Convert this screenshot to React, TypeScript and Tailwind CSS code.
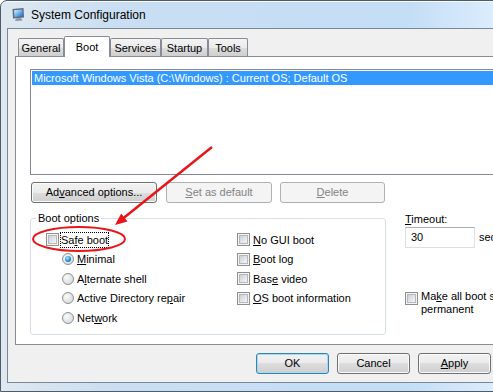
import React from "react";

const btnBase =
  "h-[21px] shrink-0 rounded-[3px] border text-[11px] leading-none flex items-center justify-center";
const btnNormal = `${btnBase} border-[#707070] text-black bg-[linear-gradient(to_bottom,#f2f2f2_0%,#ebebeb_50%,#dddddd_50%,#cfcfcf_100%)] shadow-[inset_0_0_0_1px_#fbfbfb]`;
const btnDisabled = `${btnBase} border-[#adb2b5] text-[#838383] bg-[#f4f4f4]`;
const btnDefault = `${btnBase} border-[#3c7fb1] text-black bg-[linear-gradient(to_bottom,#f2f2f2_0%,#ebebeb_50%,#dddddd_50%,#cfcfcf_100%)] shadow-[inset_0_0_0_1px_#9fdcf7]`;

const Mn: React.FC<{ children: React.ReactNode }> = ({ children }) => (
  <span className="underline decoration-1 underline-offset-[1px]">{children}</span>
);

const CheckBox: React.FC = () => (
  <span className="w-[13px] h-[13px] shrink-0 border border-[#8f8f8f] bg-[#f4f4f4] p-px flex">
    <span className="flex-1 border border-[#b4b8be] bg-[linear-gradient(135deg,#cbcfd5,#f6f6f6)]" />
  </span>
);

const Radio: React.FC<{ checked?: boolean }> = ({ checked }) => (
  <span className="w-[12px] h-[12px] shrink-0 rounded-full border border-[#8e8f8f] bg-[radial-gradient(circle_at_35%_35%,#fafafa,#cfd3d8)] flex items-center justify-center">
    {checked && (
      <span className="w-[6px] h-[6px] rounded-full bg-[radial-gradient(circle_at_40%_35%,#a8e8ff,#1d86d9_60%,#0d4b8a)]" />
    )}
  </span>
);

const tabs = [
  { name: "General", w: "w-[46px]" },
  { name: "Boot", w: "w-[46px]", active: true },
  { name: "Services", w: "w-[51px]" },
  { name: "Startup", w: "w-[47px]" },
  { name: "Tools", w: "w-[40px]" },
];

const MonitorIcon: React.FC = () => (
  <svg width="15" height="15" viewBox="0 0 15 15">
    <defs>
      <linearGradient id="scr" x1="0" y1="0" x2="1" y2="1">
        <stop offset="0" stopColor="#e8f6ff" />
        <stop offset="0.5" stopColor="#6fb3ee" />
        <stop offset="1" stopColor="#2763b8" />
      </linearGradient>
    </defs>
    <path d="M1.5 2 L12.5 1 L13 10.5 L2 11.5 Z" fill="#5c6a7c" />
    <path d="M3 3.2 L11.3 2.5 L11.7 9.3 L3.4 10 Z" fill="url(#scr)" />
    <path d="M5 11.5 L10 11 L11.5 13.5 L4 14 Z" fill="#8a96a6" />
  </svg>
);

export default function App() {
  return (
    <div className="relative w-[493px] h-[392px] overflow-hidden bg-white font-['Liberation_Sans',Arial,sans-serif] text-[11px] text-black">
      <div className="w-[586px] h-[392px] flex flex-col rounded-t-[7px] border border-[#4f5b66] bg-[linear-gradient(to_right,#dfe8f0_0%,#c9def2_20%,#c4def6_70%,#dbecfc_84%,#e4f2fe_100%)] shadow-[inset_0_1px_0_#f4f9fd]">
        {/* title bar */}
        <div className="h-[27px] shrink-0 flex items-center pl-[10px] gap-[5px]">
          <MonitorIcon />
          <span className="text-[12px] leading-none">System Configuration</span>
        </div>

        <div className="flex-1 flex px-[6px] pb-[8px]">
          <div className="flex-1 flex flex-col border border-[#7a8794] bg-[#f0f0f0] pt-[7px] pl-[7px] pr-[6px]">
            {/* tab strip */}
            <div className="h-[20px] flex items-end pl-[3px]">
              {tabs.map((t) =>
                t.active ? (
                  <div
                    key={t.name}
                    className={`${t.w} h-[21px] -mb-px relative z-10 flex items-center justify-center border border-b-0 border-[#898c95] bg-white rounded-t-[2px]`}
                  >
                    {t.name}
                  </div>
                ) : (
                  <div
                    key={t.name}
                    className={`${t.w} h-[18px] flex items-center justify-center pt-px border border-b-0 border-[#898c95] rounded-t-[2px] bg-[linear-gradient(to_bottom,#f3f3f3_0%,#ebebeb_50%,#dddddd_51%,#cfcfcf_100%)]`}
                  >
                    {t.name}
                  </div>
                )
              )}
            </div>

            {/* tab page */}
            <div className="h-[289px] border border-[#898c95] bg-white flex flex-col overflow-hidden">
              <div className="ml-[14px] mt-[12px] h-[106px] w-[528px] border border-[#828790] bg-white p-px">
                <div className="h-[14px] bg-[#3399ff] text-white leading-[14px] pl-[2px] whitespace-nowrap">
                  Microsoft Windows Vista (C:\Windows) : Current OS; Default OS
                </div>
              </div>

              <div className="mt-[7px] flex pl-[15px]">
                <button className={`${btnNormal} w-[126px]`}>
                  Ad<Mn>v</Mn>anced options...
                </button>
                <button className={`${btnDisabled} w-[106px] ml-[9px]`}>
                  <Mn>S</Mn>et as default
                </button>
                <button className={`${btnDisabled} w-[105px] ml-[8px]`}>
                  <Mn>D</Mn>elete
                </button>
              </div>

              <div className="mt-[8px] flex">
                <fieldset className="ml-[14px] w-[356px] h-[124px] shrink-0 rounded-[3px] border border-[#d5dfe5] pt-[5px]">
                  <legend className="ml-[5px] px-[2px] leading-[14px]">Boot options</legend>
                  <div className="flex">
                    <div className="w-[206px] pl-[15px] flex flex-col">
                      <div className="h-[19.5px] flex items-center">
                        <CheckBox />
                        <span className="ml-px border border-dotted border-black leading-[14px]">
                          Sa<Mn>f</Mn>e boot
                        </span>
                      </div>
                      <div className="h-[19.5px] flex items-center pl-[16px]">
                        <Radio checked />
                        <span className="ml-[3px]">
                          <Mn>M</Mn>inimal
                        </span>
                      </div>
                      <div className="h-[19.5px] flex items-center pl-[16px]">
                        <Radio />
                        <span className="ml-[3px]">
                          A<Mn>l</Mn>ternate shell
                        </span>
                      </div>
                      <div className="h-[19.5px] flex items-center pl-[16px]">
                        <Radio />
                        <span className="ml-[3px]">
                          Active Directory re<Mn>p</Mn>air
                        </span>
                      </div>
                      <div className="h-[19.5px] flex items-center pl-[16px]">
                        <Radio />
                        <span className="ml-[3px]">
                          Net<Mn>w</Mn>ork
                        </span>
                      </div>
                    </div>
                    <div className="flex flex-col">
                      <div className="h-[19.5px] flex items-center">
                        <CheckBox />
                        <span className="ml-[3px]">
                          <Mn>N</Mn>o GUI boot
                        </span>
                      </div>
                      <div className="h-[19.5px] flex items-center">
                        <CheckBox />
                        <span className="ml-[3px]">
                          <Mn>B</Mn>oot log
                        </span>
                      </div>
                      <div className="h-[19.5px] flex items-center">
                        <CheckBox />
                        <span className="ml-[3px]">
                          Bas<Mn>e</Mn> video
                        </span>
                      </div>
                      <div className="h-[19.5px] flex items-center">
                        <CheckBox />
                        <span className="ml-[3px]">
                          <Mn>O</Mn>S boot information
                        </span>
                      </div>
                    </div>
                  </div>
                </fieldset>

                <div className="ml-[19px] flex flex-col shrink-0">
                  <div className="mt-px leading-[14px]">
                    <Mn>T</Mn>imeout:
                  </div>
                  <div className="mt-px flex items-center">
                    <div className="w-[70px] h-[21px] border border-[#dbdfe6] border-t-[#abadb3] bg-white pl-[5px] flex items-center">
                      30
                    </div>
                    <span className="ml-[4px]">seconds</span>
                  </div>
                  <div className="mt-[42px] flex items-start">
                    <span className="mt-[2px]">
                      <CheckBox />
                    </span>
                    <span className="ml-[3px] w-[130px] leading-[13px]">
                      Ma<Mn>k</Mn>e all boot settings permanent
                    </span>
                  </div>
                </div>
              </div>
            </div>

            {/* dialog buttons */}
            <div className="mt-[8px] flex justify-end gap-[8px]">
              <button className={`${btnDefault} w-[73px]`}>OK</button>
              <button className={`${btnNormal} w-[73px]`}>Cancel</button>
              <button className={`${btnNormal} w-[73px]`}>
                <Mn>A</Mn>pply
              </button>
              <button className={`${btnNormal} w-[73px]`}>Help</button>
            </div>
          </div>
        </div>
      </div>

      {/* red annotation */}
      <svg className="absolute inset-0 pointer-events-none" width="493" height="392">
        <ellipse cx="79" cy="239" rx="46" ry="12" fill="none" stroke="#e8161b" strokeWidth="2" />
        <line x1="212" y1="147" x2="123" y2="218.5" stroke="#e8161b" strokeWidth="2.5" />
        <polygon points="115,225 127.5,221.4 121.2,213.6" fill="#e8161b" />
      </svg>
    </div>
  );
}
